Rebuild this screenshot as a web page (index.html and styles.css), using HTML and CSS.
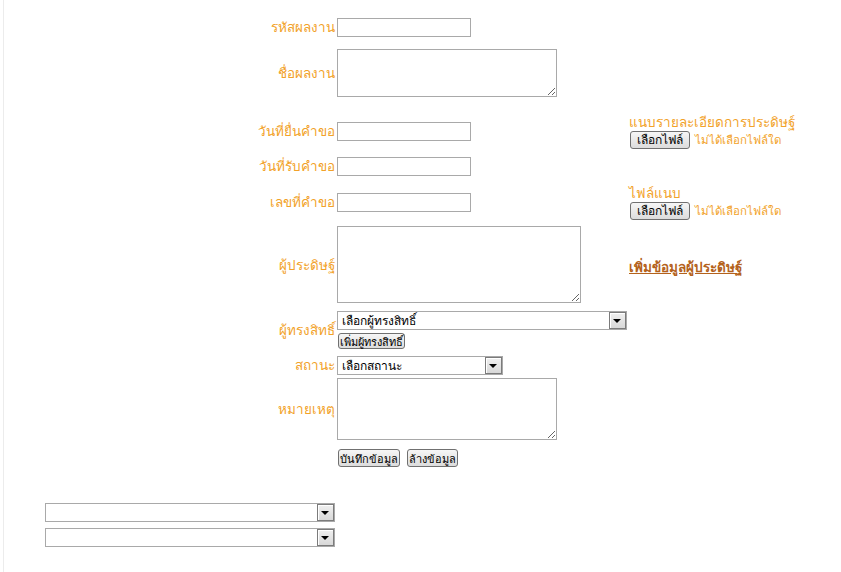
FILE: index.html
```html
<!DOCTYPE html>
<html lang="th">
<head>
    <meta charset="UTF-8">
    <title>บันทึกผลงาน</title>
    <link rel="stylesheet" href="styles.css">
</head>
<body>
    <div class="page">
        <form class="form">
            <div class="row r-code">
                <label class="lbl">รหัสผลงาน</label>
                <div class="field"><input type="text" class="txt"></div>
            </div>

            <div class="row r-name">
                <label class="lbl">ชื่อผลงาน</label>
                <div class="field"><textarea class="area area-name"></textarea></div>
            </div>

            <div class="row r-file">
                <label class="lbl">วันที่ยื่นคำขอ</label>
                <div class="field"><input type="text" class="txt"></div>
                <div class="side">
                    <div class="side-title">แนบรายละเอียดการประดิษฐ์</div>
                    <div class="file"><button type="button" class="file-btn">เลือกไฟล์</button><span class="file-none">ไม่ได้เลือกไฟล์ใด</span></div>
                </div>
            </div>

            <div class="row r-recv">
                <label class="lbl">วันที่รับคำขอ</label>
                <div class="field"><input type="text" class="txt"></div>
            </div>

            <div class="row r-file r-num">
                <label class="lbl">เลขที่คำขอ</label>
                <div class="field"><input type="text" class="txt"></div>
                <div class="side">
                    <div class="side-title">ไฟล์แนบ</div>
                    <div class="file"><button type="button" class="file-btn">เลือกไฟล์</button><span class="file-none">ไม่ได้เลือกไฟล์ใด</span></div>
                </div>
            </div>

            <div class="row r-inventor">
                <label class="lbl">ผู้ประดิษฐ์</label>
                <div class="field"><textarea class="area area-inventor"></textarea></div>
                <div class="side side-low"><a href="#" class="side-link">เพิ่มข้อมูลผู้ประดิษฐ์</a></div>
            </div>

            <div class="row r-owner">
                <label class="lbl">ผู้ทรงสิทธิ์</label>
                <div class="field">
                    <span class="sel"><select class="sel-owner"><option>เลือกผู้ทรงสิทธิ์</option></select></span>
                    <button type="button" class="btn">เพิ่มผู้ทรงสิทธิ์</button>
                </div>
            </div>

            <div class="row r-status">
                <label class="lbl">สถานะ</label>
                <div class="field">
                    <span class="sel"><select class="sel-status"><option>เลือกสถานะ</option></select></span>
                </div>
            </div>

            <div class="row r-note">
                <label class="lbl">หมายเหตุ</label>
                <div class="field"><textarea class="area area-note"></textarea></div>
            </div>

            <div class="row r-actions">
                <span></span>
                <div class="field actions">
                    <button type="button" class="btn">บันทึกข้อมูล</button>
                    <button type="button" class="btn">ล้างข้อมูล</button>
                </div>
            </div>
        </form>

        <div class="filters">
            <span class="sel"><select class="sel-wide"><option></option></select></span>
            <span class="sel"><select class="sel-wide"><option></option></select></span>
        </div>
    </div>
</body>
</html>
```

FILE: styles.css
```css
:root {
    --label: #f2a229;
    --link: #b4621c;
    --border: #a9a9a9;
}

html, body {
    margin: 0;
    background: white;
}

body {
    font-family: Tahoma, "Noto Sans", "DejaVu Sans", sans-serif;
    font-size: 13.5px;
    color: var(--label);
}

.page {
    margin-left: 3px;
    min-height: 572px;
    border-left: 1px solid #ececec;
    box-sizing: border-box;
}

.form {
    padding-top: 16px;
}

.row {
    display: grid;
    grid-template-columns: 331px 290px auto;
    column-gap: 2px;
    align-items: center;
}

.lbl {
    text-align: right;
    white-space: nowrap;
}

.field {
    display: flex;
    flex-direction: column;
    align-items: flex-start;
    gap: 3px;
}

/* row heights / spacing */
.r-code     { height: 19px; }
.r-name     { height: 48px; margin-top: 14px; }
.r-file     { height: 36px; margin-top: 16px; }
.r-recv     { height: 19px; margin-top: 6px; }
.r-num      { margin-top: 10px; }
.r-inventor { height: 77px; margin-top: 6px; }
.r-owner    { height: 37px; margin-top: 8px; }
.r-status   { height: 19px; margin-top: 6px; }
.r-note     { height: 62px; margin-top: 5px; }
.r-actions  { height: 18px; margin-top: 9px; }

.txt,
.area,
select {
    box-sizing: border-box;
    border: 1px solid var(--border);
    background: white;
    margin: 0;
    font-family: Tahoma, "Noto Sans", "DejaVu Sans", sans-serif;
    font-size: 12px;
    color: black;
    outline: none;
}

.txt {
    width: 134px;
    height: 19px;
    padding: 1px 2px;
}

.area {
    padding: 2px;
    display: block;
}
.area-name     { width: 220px; height: 48px; }
.area-inventor { width: 244px; height: 77px; }
.area-note     { width: 220px; height: 62px; }

/* selects with the old-style arrow box */
.sel {
    position: relative;
    display: inline-block;
    line-height: 0;
}

select {
    appearance: none;
    -webkit-appearance: none;
    height: 19px;
    padding: 0 20px 0 4px;
    border-radius: 0;
    line-height: 17px;
}

.sel::after {
    content: "";
    position: absolute;
    top: 1px;
    right: 1px;
    width: 15px;
    height: 15px;
    border: 1px solid #7b7b7b;
    box-shadow: inset 1px 1px 0 #fff;
    background: linear-gradient(#f0f0f0, #d8d8d8);
    pointer-events: none;
}

.sel::before {
    content: "";
    position: absolute;
    top: 8px;
    right: 6px;
    border-left: 4px solid transparent;
    border-right: 4px solid transparent;
    border-top: 4px solid black;
    z-index: 1;
    pointer-events: none;
}

.sel-owner  { width: 290px; }
.sel-status { width: 166px; }
.sel-wide   { width: 290px; }

/* buttons */
.btn,
.file-btn {
    font-family: Tahoma, "Noto Sans", "DejaVu Sans", sans-serif;
    font-size: 11px;
    color: black;
    background: linear-gradient(#f6f6f6, #dcdcdc);
    border: 1px solid #707070;
    border-radius: 3px;
    margin: 0;
    cursor: pointer;
}

.btn {
    height: 16px;
    padding: 0 1px;
    line-height: 13px;
}

.r-owner .btn {
    margin-left: 1px;
}

.actions {
    flex-direction: row;
    gap: 7px;
    padding-left: 1px;
}

.actions .btn {
    height: 18px;
}

/* right column */
.side {
    line-height: 17px;
}

.side-low {
    padding-top: 5px;
}

.file {
    display: flex;
    align-items: center;
    gap: 5px;
    margin-left: 1px;
}

.file-btn {
    font-size: 12px;
    height: 18px;
    padding: 0 6px;
    line-height: 15px;
}

.file-none {
    font-size: 11.5px;
}

.side-link {
    color: var(--link);
    font-weight: bold;
    text-decoration: underline;
}

/* lower selects */
.filters {
    display: flex;
    flex-direction: column;
    align-items: flex-start;
    gap: 6px;
    margin-top: 36px;
    padding-left: 41px;
}
```
